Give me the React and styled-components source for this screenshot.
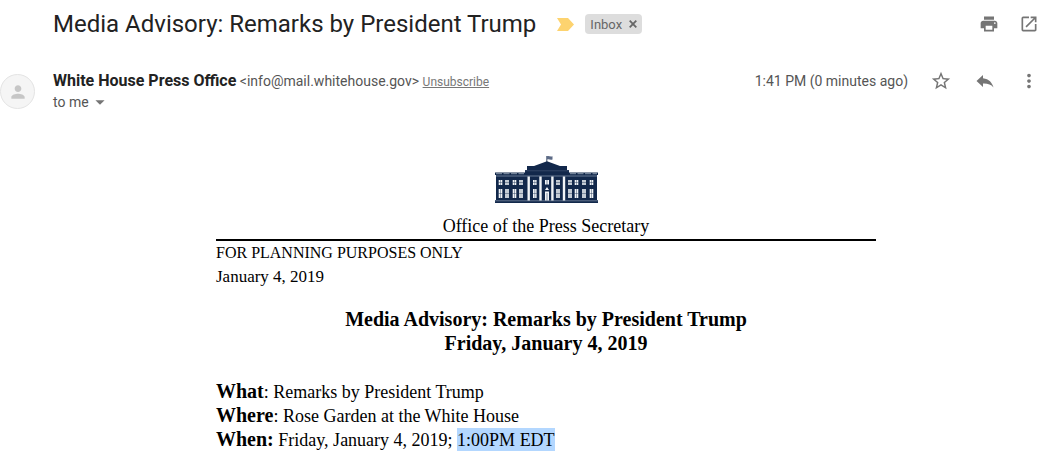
import React from "react";
import styled, { createGlobalStyle } from "styled-components";
import {
  MdPrint,
  MdOpenInNew,
  MdStarBorder,
  MdMoreVert,
  MdPerson,
  MdArrowDropDown
} from "react-icons/md";

const details = [
  { label: "What", colon: ": ", text: "Remarks by President Trump" },
  { label: "Where", colon: ": ", text: "Rose Garden at the White House" },
  {
    label: "When:",
    colon: " ",
    text: "Friday, January 4, 2019; ",
    marked: "1:00PM EDT"
  }
];

const wingWindows = [5.5, 12, 19.5, 26, 75, 81.5, 89, 96.5];
const centerWindows = [39.8, 63];
const columns = [32.5, 44.3, 56.2, 67.8];

const CloseIcon = () => (
  <svg width="8" height="8" viewBox="0 0 8 8">
    <path d="M.7.7l6.600 6.600M7.300.7L.7 7.300" stroke="currentColor" strokeWidth="1.800" />
  </svg>
);

const ReplyIcon = () => (
  <svg width="22" height="22" viewBox="0 0 22 22" fill="currentColor">
    <path d="M9 8.300V5L2.500 11 9 17v-3.400c4.600-.2 7.900.8 10.500 3.900-1.200-4.700-4.500-8.500-10.500-9.200z" />
  </svg>
);

const Window = ({ x }) => (
  <>
    <path d={`M${x - 1.8} 25h3.600v5h-3.600zM${x - 1.8} 34h3.600v9h-3.600z`} />
    <path
      d={`M${x} 25v18M${x - 2} 27.500h4M${x - 2} 38.500h4`}
      stroke="#12284b"
      strokeWidth=".4"
    />
  </>
);

const House = () => (
  <svg
    width="103"
    height="48"
    viewBox="0 0 103 48"
    role="img"
    aria-label="The White House"
  >
    <path d="M51.800 1v6" stroke="#12284b" strokeWidth=".8" />
    <path d="M52 1.200c2-.8 3 .8 5.500 0v3.300c-2.500.8-3.500-.8-5.500 0z" fill="#5c6a86" />
    <path
      d="M0 17.500h30v-2.500h2v-4h7L52 6.300 65 11h7v4h2v2.500h29v2.500h-1v25h1v3H0v-3h1V20H0z"
      fill="#12284b"
    />
    <path d="M30 15.800h44" stroke="#4b5d7b" strokeWidth=".6" />
    <path
      d="M1 18.700h28M75 18.700h27"
      stroke="#aab5c5"
      strokeWidth=".8"
      strokeDasharray="6 1.500"
    />
    <path d="M1 21h101" stroke="#7f8da4" strokeWidth=".8" />
    <path d="M0 45.800h103" stroke="#77869e" strokeWidth=".8" />
    <g fill="#f1f4f7">
      {columns.map(x => (
        <path key={x} d={`M${x} 21.500h2.400v24h-2.400z`} />
      ))}
      {wingWindows.concat(centerWindows).map(x => (
        <Window key={x} x={x} />
      ))}
      <path d="M50 25h4v4.500h-4zM52 32l2 3h-4zM50 36.500h4v9h-4z" />
    </g>
    <path d="M52 25v5M52 38v7.500" stroke="#12284b" strokeWidth=".5" />
  </svg>
);

function App() {
  return (
    <>
      <GlobalStyle />
      <Header>
        <Title>Media Advisory: Remarks by President Trump</Title>
        <Marker width="17" height="13" viewBox="0 0 17 13">
          <path d="M0 0h11l6 6.500-6 6.500H0l4-6.500z" fill="#fdd36f" />
        </Marker>
        <Label>
          Inbox
          <LabelClose aria-label="Remove label Inbox">
            <CloseIcon />
          </LabelClose>
        </Label>
        <Actions $gap={20}>
          <IconButton aria-label="Print all">
            <MdPrint />
          </IconButton>
          <IconButton aria-label="In new window">
            <MdOpenInNew />
          </IconButton>
        </Actions>
      </Header>
      <Message>
        <Avatar>
          <MdPerson size={20} />
        </Avatar>
        <Sender>
          <From>
            <Name>White House Press Office</Name>{" "}
            &lt;info@mail.whitehouse.gov&gt;{" "}
            <Unsubscribe href="#unsubscribe">Unsubscribe</Unsubscribe>
          </From>
          <Recipient>
            to me
            <MdArrowDropDown size={22} />
          </Recipient>
        </Sender>
        <Actions $gap={22}>
          <Time>1:41 PM (0 minutes ago)</Time>
          <IconButton $size={22} aria-label="Star">
            <MdStarBorder />
          </IconButton>
          <IconButton $size={22} aria-label="Reply">
            <ReplyIcon />
          </IconButton>
          <IconButton $size={22} aria-label="More">
            <MdMoreVert />
          </IconButton>
        </Actions>
      </Message>
      <Body>
        <Letter>
          <Letterhead>
            <House />
            <div>Office of the Press Secretary</div>
          </Letterhead>
          <Notice>FOR PLANNING PURPOSES ONLY</Notice>
          <div>January 4, 2019</div>
          <Headline>
            Media Advisory: Remarks by President Trump
            <br />
            Friday, January 4, 2019
          </Headline>
          {details.map(item => (
            <Detail key={item.label}>
              <b>{item.label}</b>
              {item.colon}
              {item.text}
              {item.marked && <Marked>{item.marked}</Marked>}
            </Detail>
          ))}
        </Letter>
      </Body>
    </>
  );
}

const GlobalStyle = createGlobalStyle`
  body {
    margin: 0;
    background: #fff;
    color: #222;
    font-family: Roboto, "Liberation Sans", sans-serif;
  }

  button {
    display: flex;
    padding: 0;
    border: 0;
    background: none;
    color: inherit;
    font: inherit;
    cursor: pointer;
  }
`;

const Header = styled.header`
  display: flex;
  align-items: center;
  height: 48px;
  padding: 0 13px 0 53px;
`;

const Title = styled.h1`
  margin: 0;
  font-size: 24px;
  font-weight: 400;
  line-height: 32px;
`;

const Marker = styled.svg`
  margin: 0 11px 0 21px;
`;

const Label = styled.span`
  display: flex;
  align-items: center;
  gap: 7px;
  height: 20px;
  padding: 0 5px;
  border-radius: 4px;
  background: #ddd;
  color: #666;
  font-size: 13px;
`;

const LabelClose = styled.button`
  color: #666;
`;

const Actions = styled.div`
  display: flex;
  align-items: center;
  gap: ${props => props.$gap}px;
  height: 20px;
  margin-left: auto;
  color: #757575;
`;

const IconButton = styled.button`
  svg {
    display: block;
    width: ${props => props.$size || 20}px;
    height: ${props => props.$size || 20}px;
  }
`;

const Message = styled.div`
  display: flex;
  align-items: flex-start;
  padding: 23px 12px 0 0;
`;

const Avatar = styled.div`
  display: flex;
  flex: none;
  align-items: center;
  justify-content: center;
  box-sizing: border-box;
  width: 35px;
  height: 35px;
  margin: 3px 18px 0 0;
  border: 1px solid #e4e4e4;
  border-radius: 50%;
  background: #f5f5f5;
  color: #c6c6c6;
`;

const Sender = styled.div`
  color: #555;
  font-size: 14px;
  line-height: 20px;
`;

const From = styled.div`
  height: 20px;
`;

const Name = styled.b`
  color: #222;
  font-size: 16px;
`;

const Unsubscribe = styled.a`
  color: #777;
  font-size: 12px;
`;

const Recipient = styled.button`
  align-items: center;

  svg {
    color: #757575;
  }
`;

const Time = styled.span`
  color: #555;
  font-size: 14px;
`;

const Body = styled.main`
  padding: 42px 13px 0 53px;
`;

const Letter = styled.article`
  max-width: 660px;
  margin: 0 auto;
  color: #000;
  font-family: Georgia, "Liberation Serif", serif;
  font-size: 17px;
  line-height: 24px;
`;

const Letterhead = styled.div`
  padding-bottom: 1px;
  border-bottom: 2px solid #000;
  font-size: 18px;
  text-align: center;

  svg {
    display: block;
    margin: 0 auto 11px;
  }
`;

const Notice = styled.div`
  font-size: 16px;
`;

const Headline = styled.h2`
  margin: 18px 0 24px;
  font-size: 20px;
  line-height: 24px;
  text-align: center;
`;

const Detail = styled.div`
  height: 24px;
  font-size: 18px;

  b {
    font-size: 20px;
  }
`;

const Marked = styled.mark`
  display: inline-block;
  background: #b3d7ff;
  color: inherit;
`;

export default App;
